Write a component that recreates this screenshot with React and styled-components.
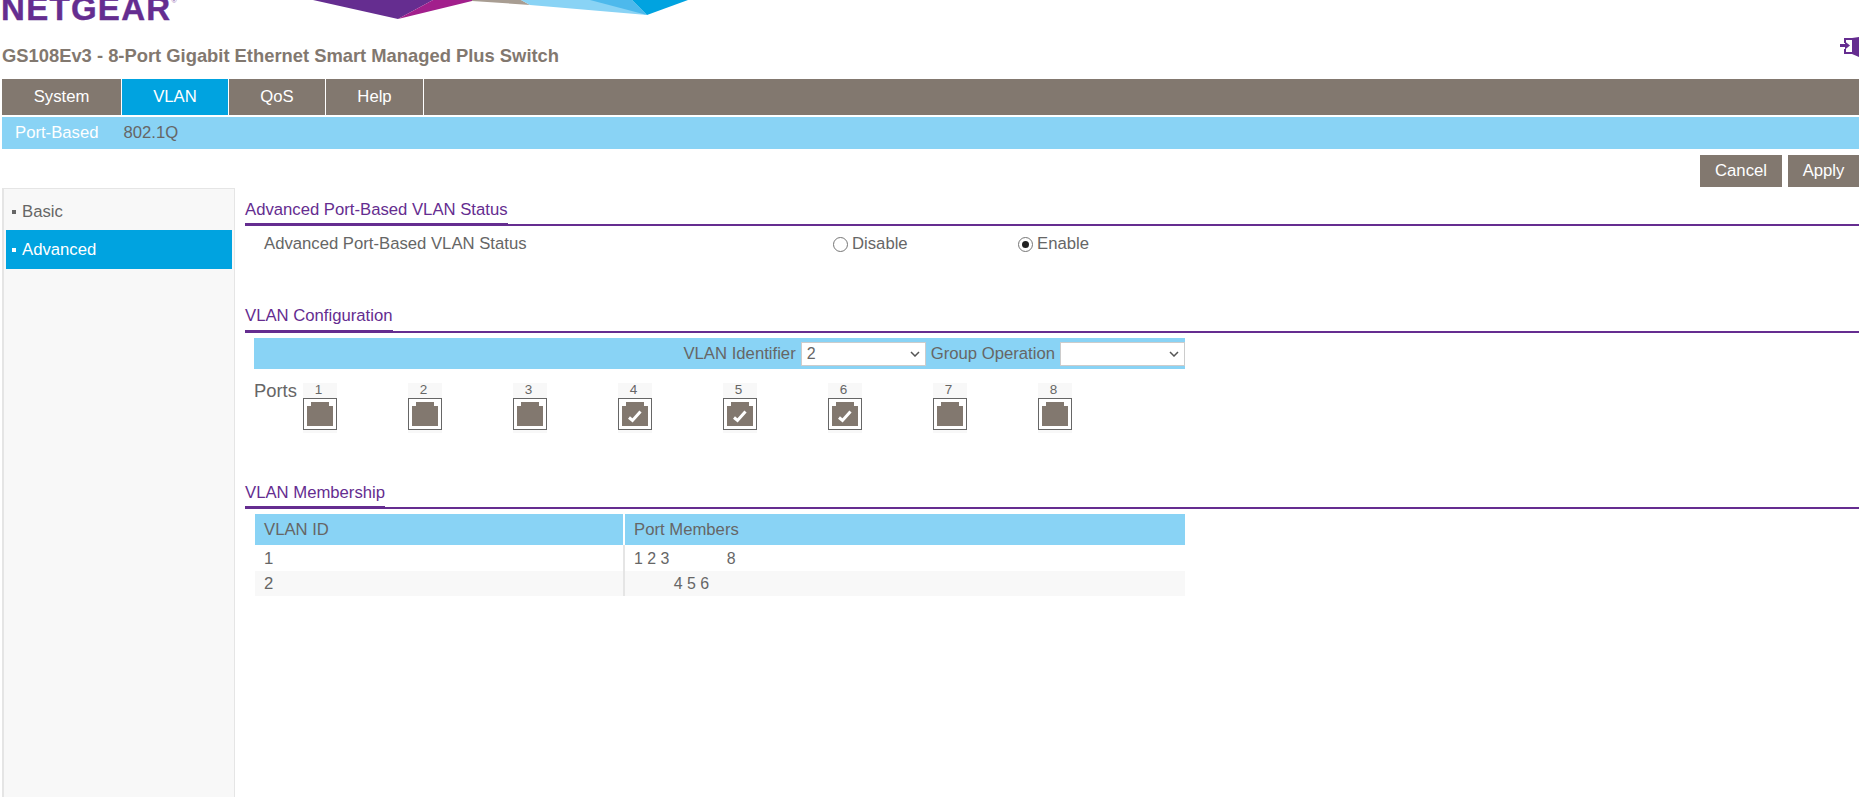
import styled, { createGlobalStyle } from 'styled-components'

const GlobalStyle = createGlobalStyle`
    html, body {
        margin: 0;
        padding: 0;
        height: 100%;
        overflow: hidden;
        background: #fff;
    }
    body {
        font-family: "Liberation Sans", Arial, sans-serif;
        font-size: 16.7px;
        color: #666;
    }
`

const purple = '#652d90'
const taupe = '#82786f'
const sky = '#89d3f5'
const blue = '#00a3e0'

const Page = styled.div`
    height: 797px;
    padding: 0 8px 0 2px;
    box-sizing: border-box;
    display: flex;
    flex-direction: column;
    overflow: hidden;
`

const Masthead = styled.div`
    height: 79px;
    position: relative;
    flex: none;
`

const BrandRow = styled.div`
    height: 35px;
    display: flex;
    overflow: hidden;
`

const Logo = styled.div`
    width: 310px;
    flex: none;
    margin: -8px 0 0 -1px;
    font-size: 33px;
    line-height: 33px;
    font-weight: 700;
    letter-spacing: 1.3px;
    -webkit-text-stroke: 0.4px ${purple};
    color: ${purple};
    white-space: nowrap;
    sup {
        font-size: 7px;
        font-weight: 400;
        letter-spacing: 0;
        -webkit-text-stroke: 0;
        vertical-align: 17px;
        line-height: 0;
        opacity: 0.7;
    }
`

const Title = styled.h1`
    margin: 11px 0 0;
    font-size: 18.36px;
    line-height: 20px;
    font-weight: 700;
    color: ${taupe};
`

const Logout = styled.svg`
    position: absolute;
    right: 0;
    top: 37px;
`

const Nav = styled.nav`
    height: 36px;
    flex: none;
    display: flex;
    background: ${taupe};
`

const NavItem = styled.div`
    width: ${p => p.$w}px;
    border-right: 1px solid #fff;
    box-sizing: border-box;
    background: ${p => p.$active ? blue : 'transparent'};
    color: #fff;
    text-align: center;
    line-height: 36px;
`

const SubNav = styled.div`
    height: 32px;
    flex: none;
    margin-top: 2px;
    background: ${sky};
    display: flex;
    gap: 25px;
    padding-left: 13px;
    line-height: 31px;
`

const SubItem = styled.span`
    color: ${p => p.$active ? '#fff' : '#666'};
`

const Actions = styled.div`
    height: 32px;
    flex: none;
    margin-top: 6px;
    display: flex;
    justify-content: flex-end;
    gap: 6px;
`

const Button = styled.div`
    width: ${p => p.$w}px;
    background: ${taupe};
    color: #fff;
    text-align: center;
    line-height: 32px;
`

const Body = styled.div`
    flex: 1;
    display: flex;
    margin-top: 1px;
    min-height: 0;
`

const Sidebar = styled.aside`
    width: 233px;
    flex: none;
    box-sizing: border-box;
    background: #f8f8f8;
    border: 1px solid #e5e5e5;
    border-left-width: 2px;
    border-bottom: 0;
    padding: 4px 2px 0;
`

const SideItem = styled.div`
    height: ${p => p.$active ? 39 : 37}px;
    display: flex;
    align-items: center;
    gap: 6px;
    padding-left: 6px;
    background: ${p => p.$active ? blue : 'transparent'};
    color: ${p => p.$active ? '#fff' : '#666'};
    &::before {
        content: '';
        width: 4px;
        height: 4px;
        background: ${p => p.$active ? '#fff' : '#666'};
    }
`

const Main = styled.main`
    flex: 1;
    margin-left: 10px;
    min-width: 0;
`

const Section = styled.section`
    margin-top: ${p => p.$top}px;
`

const Heading = styled.div`
    border-bottom: 2px solid ${purple};
    height: 38px;
    box-sizing: border-box;
    display: flex;
    align-items: flex-end;
`

const HeadingText = styled.h2`
    margin: 0 0 -2px;
    padding-bottom: ${p => p.$pad}px;
    font-size: 16.7px;
    line-height: 18px;
    font-weight: 400;
    color: ${purple};
    border-bottom: 3px solid ${purple};
`

const StatusRow = styled.div`
    display: flex;
    height: 34px;
    box-sizing: border-box;
    align-items: center;
    padding: 2px 0 0 19px;
`

const StatusLabel = styled.div`
    width: 569px;
`

const RadioOption = styled.label`
    width: ${p => p.$w}px;
    display: flex;
    align-items: center;
    gap: 4px;
`

const RadioDot = styled.span`
    width: 15px;
    height: 15px;
    box-sizing: border-box;
    border: 1.5px solid #767676;
    border-radius: 50%;
    background: #fff;
    display: flex;
    align-items: center;
    justify-content: center;
    &::after {
        content: '';
        width: 7px;
        height: 7px;
        border-radius: 50%;
        background: ${p => p.$on ? '#222' : 'transparent'};
    }
`

const ConfigPanel = styled.div`
    width: 931px;
    margin: 5px 0 0 9px;
`

const ConfigBar = styled.div`
    height: 31px;
    background: ${sky};
    display: flex;
    justify-content: flex-end;
    align-items: center;
    gap: 5px;
`

const FakeSelect = styled.div`
    width: 125px;
    height: 24px;
    box-sizing: border-box;
    background: #fff;
    border: 1px solid #ccc;
    padding-left: 5px;
    display: flex;
    align-items: center;
    font-size: 16px;
    line-height: 22px;
    svg {
        margin: 0 5px 0 auto;
    }
`

const PortsRow = styled.div`
    display: flex;
    margin-top: 14px;
`

const PortsLabel = styled.div`
    width: 49px;
    flex: none;
    font-size: 18.4px;
    line-height: 20px;
    margin-top: -2px;
`

const PortList = styled.div`
    display: flex;
    gap: 71px;
`

const Port = styled.div`
    width: 34px;
    height: 50px;
    background: #f8f8f8;
`

const PortNum = styled.div`
    height: 15px;
    text-align: center;
    font-size: 13.5px;
    line-height: 14px;
    padding-right: 3px;
`

const PortBox = styled.div`
    width: 34px;
    height: 32px;
    box-sizing: border-box;
    border: 1px solid #666;
    background: #fff;
    padding: 3px;
    svg {
        display: block;
    }
`

const Table = styled.div`
    width: 930px;
    margin: 5px 0 0 10px;
`

const Row = styled.div`
    display: flex;
    height: ${p => p.$h}px;
    background: ${p => p.$bg};
    line-height: ${p => p.$lh || p.$h}px;
`

const CellId = styled.div`
    width: 368px;
    flex: none;
    padding-left: 9px;
    box-sizing: border-box;
`

const CellMembers = styled.div`
    flex: 1;
    border-left: 2px solid ${p => p.$head ? '#fff' : '#e5e5e5'};
    padding-left: 9px;
    font-size: ${p => p.$head ? '16.7px' : '15.9px'};
    white-space: pre;
`

const Slot = styled.span`
    visibility: ${p => p.$on ? 'visible' : 'hidden'};
`

function RjIcon({ checked }) {
    return (
        <svg width="26" height="24" viewBox="0 0 26 24">
            <path d="M4 0H22V4H26V24H0V4H4Z" fill="#82786f" />
            {checked && <path d="M7 15.5L10.5 18.5L18.5 9.5" fill="none" stroke="#fff" strokeWidth="3" />}
        </svg>
    )
}

function Chevron() {
    return (
        <svg width="10" height="6" viewBox="0 0 10 6">
            <path d="M1 1L5 5L9 1" fill="none" stroke="#555" strokeWidth="1.5" />
        </svg>
    )
}

function Members({ list }) {
    return [1, 2, 3, 4, 5, 6, 7, 8].map(n => (
        <Slot key={n} $on={list.includes(n)}>{n} </Slot>
    ))
}

export default function App() {
    return (
        <Page>
            <GlobalStyle />
            <Masthead>
                <BrandRow>
                    <Logo>NETGEAR<sup>®</sup></Logo>
                    <svg width="390" height="30" viewBox="0 0 390 30">
                        <path d="M2 0L87 19L122 0Z" fill="#652d90" />
                        <path d="M122 0L87 19L161 1V0Z" fill="#a21f8c" />
                        <path d="M161 0V1L219 5L210 0Z" fill="#a89d92" />
                        <path d="M210 0L219 5L336 15L300 0Z" fill="#89d3f5" />
                        <path d="M279 0L336 15L321 0Z" fill="#4db9ec" />
                        <path d="M321 0L336 15L377 0Z" fill="#00a3e0" />
                    </svg>
                </BrandRow>
                <Title>GS108Ev3 - 8-Port Gigabit Ethernet Smart Managed Plus Switch</Title>
                <Logout width="19" height="20" viewBox="0 0 19 20">
                    <path d="M12 1L19 0V20L12 17Z" fill="#652d90" />
                    <path d="M4 1H12V3H6V6H4Z" fill="#652d90" />
                    <path d="M4 12H6V15H12V17H4Z" fill="#652d90" />
                    <path d="M0 7H5V4.5L10 8.5L5 12.5V10H0Z" fill="#652d90" />
                </Logout>
            </Masthead>
            <Nav>
                <NavItem $w={120}>System</NavItem>
                <NavItem $w={107} $active>VLAN</NavItem>
                <NavItem $w={97}>QoS</NavItem>
                <NavItem $w={98}>Help</NavItem>
            </Nav>
            <SubNav>
                <SubItem $active>Port-Based</SubItem>
                <SubItem>802.1Q</SubItem>
            </SubNav>
            <Actions>
                <Button $w={82}>Cancel</Button>
                <Button $w={71}>Apply</Button>
            </Actions>
            <Body>
                <Sidebar>
                    <SideItem>Basic</SideItem>
                    <SideItem $active>Advanced</SideItem>
                </Sidebar>
                <Main>
                    <Section $top={0}>
                        <Heading><HeadingText $pad={4}>Advanced Port-Based VLAN Status</HeadingText></Heading>
                        <StatusRow>
                            <StatusLabel>Advanced Port-Based VLAN Status</StatusLabel>
                            <RadioOption $w={185}><RadioDot />Disable</RadioOption>
                            <RadioOption $w={100}><RadioDot $on />Enable</RadioOption>
                        </StatusRow>
                    </Section>
                    <Section $top={35}>
                        <Heading><HeadingText $pad={5}>VLAN Configuration</HeadingText></Heading>
                        <ConfigPanel>
                            <ConfigBar>
                                VLAN Identifier
                                <FakeSelect>2<Chevron /></FakeSelect>
                                Group Operation
                                <FakeSelect><Chevron /></FakeSelect>
                            </ConfigBar>
                            <PortsRow>
                                <PortsLabel>Ports</PortsLabel>
                                <PortList>
                                    {[1, 2, 3, 4, 5, 6, 7, 8].map(n => (
                                        <Port key={n}>
                                            <PortNum>{n}</PortNum>
                                            <PortBox><RjIcon checked={n >= 4 && n <= 6} /></PortBox>
                                        </Port>
                                    ))}
                                </PortList>
                            </PortsRow>
                        </ConfigPanel>
                    </Section>
                    <Section $top={38}>
                        <Heading><HeadingText $pad={4}>VLAN Membership</HeadingText></Heading>
                        <Table>
                            <Row $h={31} $bg={sky}>
                                <CellId>VLAN ID</CellId>
                                <CellMembers $head>Port Members</CellMembers>
                            </Row>
                            <Row $h={26} $lh={27} $bg="#fff">
                                <CellId>1</CellId>
                                <CellMembers><Members list={[1, 2, 3, 8]} /></CellMembers>
                            </Row>
                            <Row $h={25} $bg="#f8f8f8">
                                <CellId>2</CellId>
                                <CellMembers><Members list={[4, 5, 6]} /></CellMembers>
                            </Row>
                        </Table>
                    </Section>
                </Main>
            </Body>
        </Page>
    )
}
